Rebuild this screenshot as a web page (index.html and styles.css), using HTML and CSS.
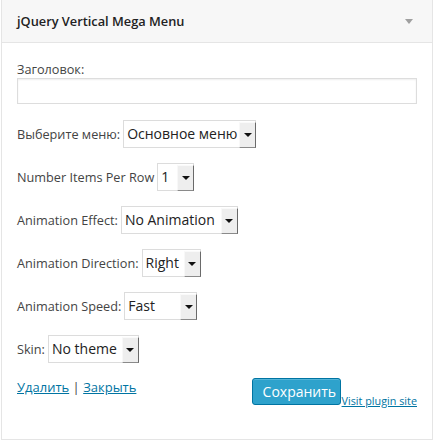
FILE: index.html
```html
<!DOCTYPE html>
<html lang="ru">
<head>
<meta charset="utf-8">
<title>jQuery Vertical Mega Menu</title>
<link rel="stylesheet" href="styles.css">
</head>
<body>
<div class="widget">
  <div class="widget-top">
    <h3 class="widget-title">jQuery Vertical Mega Menu</h3>
    <span class="toggle"></span>
  </div>
  <div class="widget-inside">
    <div class="field-title">
      <label class="lbl" for="t">Заголовок:</label>
      <input id="t" class="text-input" type="text">
    </div>
    <div class="row">
      <span class="lbl">Выберите меню:</span>
      <span class="select w-menu"><span class="sel-text">Основное меню</span><span class="sel-btn"></span></span>
    </div>
    <div class="row">
      <span class="lbl">Number Items Per Row</span>
      <span class="select w-num"><span class="sel-text">1</span><span class="sel-btn"></span></span>
    </div>
    <div class="row">
      <span class="lbl">Animation Effect:</span>
      <span class="select w-effect"><span class="sel-text">No Animation</span><span class="sel-btn"></span></span>
    </div>
    <div class="row">
      <span class="lbl">Animation Direction:</span>
      <span class="select w-dir"><span class="sel-text">Right</span><span class="sel-btn"></span></span>
    </div>
    <div class="row">
      <span class="lbl">Animation Speed:</span>
      <span class="select w-speed"><span class="sel-text">Fast</span><span class="sel-btn"></span></span>
    </div>
    <div class="row">
      <span class="lbl">Skin:</span>
      <span class="select w-skin"><span class="sel-text">No theme</span><span class="sel-btn"></span></span>
    </div>
    <div class="actions">
      <div class="links">
        <a href="#" class="link">Удалить</a> <span class="sep">|</span> <a href="#" class="link">Закрыть</a>
      </div>
      <div class="save-group">
        <button class="btn-save" type="button">Сохранить</button><a href="#" class="visit">Visit plugin site</a>
      </div>
    </div>
  </div>
</div>
</body>
</html>
```
FILE: styles.css
```css
html, body {
  margin: 0;
  padding: 0;
  background: #fff;
}
body {
  font-family: "Open Sans", "Liberation Sans", sans-serif;
  color: #444;
  padding: 0 3px 0 1px;
}
.widget {
  width: 432px;
  box-sizing: border-box;
  border: 1px solid #e5e5e5;
  border-top: none;
  background: #fff;
}
.widget-top {
  height: 43px;
  box-sizing: border-box;
  background: #f7f7f7;
  border-bottom: 1px solid #e5e5e5;
  display: flex;
  align-items: center;
  justify-content: space-between;
  padding: 0 19px 0 15px;
}
.widget-title {
  margin: 0;
  font-size: 12.8px;
  font-weight: 600;
  color: #222;
  line-height: 18px;
}
.toggle {
  width: 0;
  height: 0;
  border-left: 4px solid transparent;
  border-right: 4px solid transparent;
  border-top: 5px solid #a0a0a0;
  margin-top: 1px;
}
.widget-inside {
  padding: 17px 15px 34px 15px;
}
.lbl {
  font-size: 12.7px;
  line-height: 18px;
  color: #444;
}
.field-title {
  display: flex;
  flex-direction: column;
  align-items: flex-start;
}
.text-input {
  margin: 0;
  width: 400px;
  height: 26px;
  box-sizing: border-box;
  border: 1px solid #ddd;
  box-shadow: inset 0 1px 2px rgba(0,0,0,0.07);
  background: #fff;
}
.row {
  display: flex;
  align-items: center;
  gap: 3px;
  margin-top: 15px;
  height: 28px;
}
.field-title + .row {
  margin-top: 16px;
}
.select {
  display: flex;
  align-items: stretch;
  height: 28px;
  box-sizing: border-box;
  border: 1px solid #dcdcdc;
  background: #fff;
}
.sel-text {
  flex: 1;
  font-size: 14px;
  line-height: 26px;
  color: #222;
  padding-left: 3px;
  white-space: nowrap;
  overflow: hidden;
}
.sel-btn {
  width: 17px;
  box-sizing: border-box;
  margin: 1px -1px -1px 0;
  background: #eeeeee;
  border-left: 1px solid #f8f8f8;
  border-top: 1px solid #fafafa;
  border-right: 1px solid #6a6a6a;
  border-bottom: 1px solid #8a8a8a;
  display: flex;
  align-items: center;
  justify-content: center;
  padding-bottom: 1px;
}
.sel-btn::after {
  content: "";
  width: 0;
  height: 0;
  border-left: 4px solid transparent;
  border-right: 4px solid transparent;
  border-top: 4px solid #111;
}
.w-menu { width: 133px; }
.w-num { width: 37px; }
.w-effect { width: 117px; }
.w-dir { width: 59px; }
.w-speed { width: 73px; }
.w-skin { width: 91px; }
.actions {
  margin-top: 15px;
  display: flex;
  justify-content: space-between;
  align-items: flex-start;
}
.links {
  font-size: 13px;
  line-height: 18px;
}
.link {
  color: #0074a2;
  text-decoration: underline;
}
.sep {
  color: #444;
}
.save-group {
  display: flex;
  align-items: flex-end;
}
.btn-save {
  margin: 0 1px 0 0;
  width: 89px;
  height: 27px;
  box-sizing: border-box;
  background: #2ea2cc;
  border: 1px solid #0074a2;
  border-radius: 3px;
  color: #fff;
  font-family: "Open Sans", "Liberation Sans", sans-serif;
  font-size: 14px;
  line-height: 24px;
  padding: 0 10px;
  box-shadow: inset 0 1px 0 rgba(120,200,230,0.5);
}
.visit {
  font-size: 10.8px;
  line-height: 13px;
  color: #0074a2;
  text-decoration: underline;
  margin-bottom: -2px;
}
```
